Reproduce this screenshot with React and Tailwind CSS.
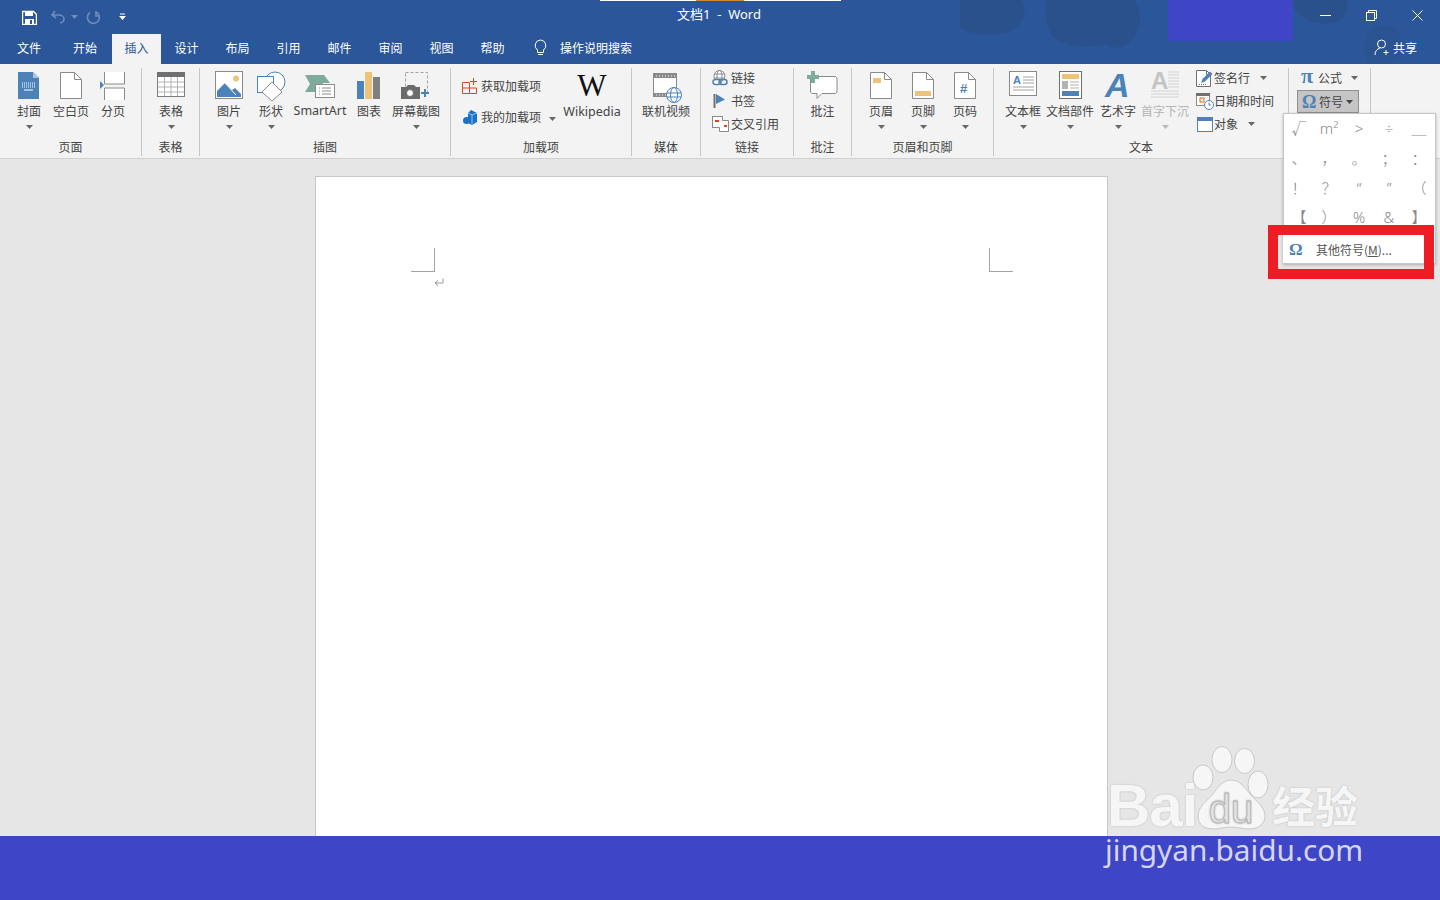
const cjk = "font-['Noto_Sans_CJK_SC','Liberation_Sans',sans-serif]";

function Ico({ w = 30, h = 30, className = '', children }) {
  return (
    <svg width={w} height={h} viewBox={`0 0 ${w} ${h}`} fill="none" className={`shrink-0 ${className}`}>
      {children}
    </svg>
  );
}

const Caret = ({ color = '#666', className = '' }) => (
  <svg width="7" height="4" viewBox="0 0 7 4" className={`shrink-0 ${className}`}>
    <path d="M0 0h7L3.5 4z" fill={color} />
  </svg>
);

function BigBtn({ label, icon, w = 42, caret, disabled, latin }) {
  return (
    <div className="flex flex-col items-center" style={{ width: w }}>
      <div className="h-[32px] pt-[3px] flex justify-center items-start">{icon}</div>
      <div className={`h-[22px] leading-[22px] whitespace-nowrap ${latin ? "font-['Noto_Sans',sans-serif] text-[12.5px]" : 'text-[12px]'} ${disabled ? 'text-[#b5b5b5]' : 'text-[#444]'}`}>
        {label}
      </div>
      {caret && <Caret className="mt-[3px]" color={disabled ? '#bbb' : '#666'} />}
    </div>
  );
}

function Row({ icon, label, caret, iconW = 19, labelClass = '', caretGap = 'ml-[9px]' }) {
  return (
    <div className="h-[20px] flex items-center text-[12px] text-[#444] whitespace-nowrap">
      <div className="flex justify-center" style={{ width: iconW }}>{icon}</div>
      <span className={labelClass}>{label}</span>
      {caret && <Caret className={caretGap} />}
    </div>
  );
}

function Group({ label, w, children, className = '', last }) {
  return (
    <div className={`h-full flex flex-col shrink-0 ${last ? '' : 'border-r border-[#c6c6c6]'}`} style={{ width: w }}>
      <div className={`h-[70px] flex ${className}`}>{children}</div>
      {label && <div className="h-[18px] leading-[18px] text-center text-[12px] text-[#444]">{label}</div>}
    </div>
  );
}

const CoverIcon = (
  <Ico w={22} h={29}>
    <path d="M0 1h15l6 6v21H0z" fill="#4d82b8" />
    <path d="M15 1l6 6h-6z" fill="#a9c4de" />
    <path d="M4 12h13M4 14h13M4 16h13" stroke="#fff" strokeDasharray="1 1" />
    <path d="M6 19h9" stroke="#fff" />
  </Ico>
);
const BlankIcon = (
  <Ico w={22} h={29}>
    <path d="M.5 1.500h14l7 7v19H.5z" fill="#fff" stroke="#8a8a8a" />
    <path d="M14.500 1.500v7h7" stroke="#8a8a8a" />
  </Ico>
);
const BreakIcon = (
  <Ico w={26} h={29}>
    <path d="M4.500 1v12h20V1M4.500 29V17h20v12" stroke="#8a8a8a" fill="#fff" />
    <path d="M0 10l4 4-4 4z" fill="#4d82b8" />
  </Ico>
);
const TableIcon = (
  <Ico w={29} h={27}>
    <rect x=".5" y="1.500" width="27" height="24" fill="#fff" stroke="#808080" />
    <rect x="0" y="1" width="28" height="5" fill="#707070" />
    <path d="M1 11h26M1 16h26M1 21h26M7.500 6v19M14 6v19M20.500 6v19" stroke="#b3b3b3" />
  </Ico>
);
const PictureIcon = (
  <Ico w={29} h={29}>
    <rect x=".5" y=".5" width="27" height="27" fill="#fff" stroke="#8a8a8a" />
    <circle cx="21" cy="7.500" r="3" fill="#edc37a" />
    <path d="M2 26v-6l8-8 7 7 3-2 6 6v3z" fill="#4d82b8" />
    <path d="M10 12l11 12" stroke="#fff" strokeWidth="1" />
  </Ico>
);
const ShapesIcon = (
  <Ico w={30} h={31}>
    <circle cx="19" cy="11" r="10" fill="#fff" stroke="#4d82b8" />
    <rect x="1.500" y="5.500" width="16" height="16" fill="#fff" stroke="#4d82b8" />
    <path d="M16 11l10 10-10 9L6 21z" fill="#fff" stroke="#8a8a8a" />
  </Ico>
);
const SmartArtIcon = (
  <Ico w={31} h={25}>
    <path d="M0 1h19l6 8-7 0-3 9H0l5-8z" fill="#7fab9b" />
    <rect x="10.500" y="10.500" width="19" height="13" fill="#fff" stroke="#8a8a8a" />
    <path d="M14 14h1M17 14h9M14 17h1M17 17h9M14 20h1M17 20h9" stroke="#8a8a8a" />
  </Ico>
);
const ChartIcon = (
  <Ico w={24} h={27}>
    <rect x="0" y="9" width="7" height="18" fill="#4d82b8" />
    <rect x="8" y="0" width="7" height="27" fill="#edc37a" />
    <rect x="16" y="5" width="7" height="22" fill="#7f7f7f" />
  </Ico>
);
const ScreenshotIcon = (
  <Ico w={30} h={28}>
    <rect x="4.500" y=".5" width="22" height="20" stroke="#a3a3a3" strokeDasharray="3 2" />
    <path d="M0 27V15h5l2-2h6l2 2h4v12z" fill="#6b6b6b" />
    <circle cx="9" cy="21" r="3.500" fill="#fff" stroke="#6b6b6b" strokeWidth="1" />
    <path d="M24 17v8M20 21h8" stroke="#4d82b8" strokeWidth="2" />
  </Ico>
);
const GetAddinIcon = (
  <Ico w={16} h={16}>
    <path d="M.5 4.500h7v11h-7zM.5 10h14v5.500h-7" stroke="#d9481c" />
    <path d="M11.500 0v7M8 3.500h7" stroke="#d9481c" />
  </Ico>
);
const MyAddinIcon = (
  <Ico w={15} h={15}>
    <path d="M8 0l6 3v9l-5 3-4-2V3z" fill="#1a73c9" />
    <circle cx="3.500" cy="10.500" r="3.500" fill="#1a73c9" />
    <path d="M5 3l4 2 5-2M9 5v9" stroke="#f3f3f3" strokeWidth=".6" />
  </Ico>
);
const VideoIcon = (
  <Ico w={29} h={30}>
    <rect x=".5" y=".5" width="23" height="23" fill="#fff" stroke="#8a8a8a" />
    <rect x="1" y="1" width="22" height="4" fill="#8a8a8a" />
    <rect x="1" y="20" width="22" height="4" fill="#8a8a8a" />
    <path d="M3 3h1M6 3h1M9 3h1M12 3h1M15 3h1M18 3h1M21 3h1M3 22h1M6 22h1M9 22h1M12 22h1" stroke="#fff" />
    <circle cx="21" cy="22" r="7.500" fill="#fff" stroke="#4d82b8" />
    <ellipse cx="21" cy="22" rx="3.500" ry="7.500" stroke="#4d82b8" />
    <path d="M14 20h14M14 24h14" stroke="#4d82b8" />
  </Ico>
);
const LinkIcon = (
  <Ico w={16} h={16}>
    <circle cx="7.500" cy="6" r="5.500" stroke="#8a8a8a" fill="#fff" />
    <ellipse cx="7.500" cy="6" rx="2.500" ry="5.500" stroke="#8a8a8a" />
    <path d="M2 4h11M2 8h11" stroke="#8a8a8a" />
    <rect x="1" y="9.500" width="8" height="5" rx="2.500" fill="#fff" stroke="#4d82b8" strokeWidth="1.500" />
    <rect x="7" y="9.500" width="8" height="5" rx="2.500" stroke="#4d82b8" strokeWidth="1.500" />
  </Ico>
);
const BookmarkIcon = (
  <Ico w={14} h={16}>
    <path d="M1.500 1v14" stroke="#707070" strokeWidth="2" />
    <path d="M3 1l9 5.500L3 11z" fill="#4d82b8" />
  </Ico>
);
const CrossRefIcon = (
  <Ico w={17} h={16}>
    <rect x=".5" y=".5" width="10" height="11" fill="#fff" stroke="#8a8a8a" />
    <path d="M3 5h4" stroke="#d9481c" strokeWidth="2" />
    <path d="M10.500 4.500h6v11h-9v-4" stroke="#8a8a8a" fill="#fff" />
    <path d="M12 10h3" stroke="#d9481c" strokeWidth="2" />
  </Ico>
);
const CommentIcon = (
  <Ico w={31} h={29}>
    <path d="M3.500 5.500h25l1.500 1.500v14l-1.500 1.500H15l-5 5v-5H5l-1.500-1.500z" fill="#fff" stroke="#8a8a8a" />
    <path d="M6 0v12M0 6h12" stroke="#7fab9b" strokeWidth="4" />
  </Ico>
);
const DocBase = ({ children }) => (
  <Ico w={22} h={29}>
    <path d="M.5 1.500h14l7 7v19H.5z" fill="#fff" stroke="#8a8a8a" />
    <path d="M14.500 1.500v7h7" stroke="#8a8a8a" />
    {children}
  </Ico>
);
const TextBoxIcon = (
  <Ico w={29} h={26} className="overflow-visible">
    <rect x=".5" y=".5" width="27" height="24" fill="#fff" stroke="#8a8a8a" />
    <text x="4" y="13" fontSize="11" fontWeight="700" fill="#4d82b8" fontFamily="Liberation Sans">A</text>
    <path d="M14 6h11M14 9h11M14 12h11M4 16h21M4 19h21" stroke="#a3a3a3" />
  </Ico>
);
const PartsIcon = (
  <Ico w={23} h={29}>
    <rect x=".5" y=".5" width="22" height="27" fill="#fff" stroke="#707070" />
    <rect x="3" y="3" width="17" height="5" fill="#edc37a" />
    <rect x="3" y="10" width="6" height="8" fill="#b3b3b3" />
    <path d="M11 11h9M11 14h9M11 17h9" stroke="#b3b3b3" />
    <rect x="3" y="20" width="17" height="5" fill="#4d82b8" />
  </Ico>
);
const WordArtIcon = (
  <Ico w={28} h={29} className="overflow-visible">
    <text x="1" y="25.500" fontSize="34" fontWeight="700" fontStyle="italic" fill="#4d82b8" fontFamily="Liberation Sans">A</text>
  </Ico>
);
const DropCapIcon = (
  <Ico w={29} h={29} className="overflow-visible">
    <text x="0" y="18" fontSize="24" fontWeight="700" fill="#c4c4c4" fontFamily="Liberation Sans">A</text>
    <path d="M17 1h11M17 4h11M17 7h11M17 10h11M17 13h11M17 16h11M0 20h28M0 23h28M0 26h28" stroke="#d2d2d2" />
  </Ico>
);
const SignIcon = (
  <Ico w={18} h={18}>
    <path d="M.5 1.500h10l4 4v12H.5z" fill="#fff" stroke="#707070" />
    <path d="M10.500 1.500v4h4" stroke="#707070" />
    <path d="M5 14l1.500-4L14 2.500l2.500 2.500L9 12.500z" fill="#4d82b8" />
    <path d="M3 15.500h7" stroke="#707070" strokeDasharray="1 1" />
  </Ico>
);
const DateIcon = (
  <Ico w={18} h={17}>
    <rect x=".5" y=".5" width="13" height="12" fill="#fff" stroke="#8a8a8a" />
    <rect x="0" y="0" width="14" height="3" fill="#707070" />
    <rect x="4" y="5" width="4" height="4" stroke="#d9681c" fill="#fff" />
    <circle cx="13" cy="12" r="4.500" fill="#fff" stroke="#4d82b8" />
    <path d="M13 9.500V12h2" stroke="#4d82b8" />
  </Ico>
);
const ObjectIcon = (
  <Ico w={16} h={15}>
    <rect x=".5" y=".5" width="15" height="14" fill="#fff" stroke="#4d82b8" />
    <rect x="0" y="0" width="16" height="4" fill="#4d82b8" />
  </Ico>
);

const symbols = ['√', 'm²', '>', '÷', '＿', '、', '，', '。', '；', '：', '！', '？', '“', '”', '（', '【', '）', '%', '&', '】'];
const tabs = [
  ['文件', 58],
  ['开始', 54],
  ['插入', 49, true],
  ['设计', 51],
  ['布局', 51],
  ['引用', 51],
  ['邮件', 51],
  ['审阅', 51],
  ['视图', 51],
  ['帮助', 51],
];

export default function App() {
  return (
    <div className={`h-screen w-[1440px] flex flex-col overflow-hidden relative bg-[#e6e6e6] ${cjk}`}>
      {/* title bar */}
      <div className="relative bg-[#2b579a] h-[64px] shrink-0 flex flex-col overflow-hidden">
        <svg className="absolute right-0 top-0" width="480" height="64" viewBox="0 0 480 64">
          <path d="M0 0h62c6 10 2 26-14 32-14 4-34 4-48-4zM86 0h88c10 14 6 32-4 42-4 6-16 8-24 2-14 4-40 4-52-6-8-10-10-26-8-38zM330 0h56c4 8 0 18-10 22-12 4-38 2-46-22z" fill="#2a518b" />
          <path d="M410 30c10-8 24-6 30 4 4 10 0 24-8 30h-24c-6-10-6-26 2-34z" fill="#2a5391" />
        </svg>
        <div className="relative h-[34px] flex items-center">
          <div className="w-[677px] flex items-center pl-[22px] shrink-0">
            <Ico w={15} h={15}>
              <path d="M.5 1.500h11l3 3v10H.5z" stroke="#fff" strokeWidth="1.400" fill="none" />
              <rect x="3" y="2" width="8" height="4" fill="#fff" />
              <rect x="3" y="9" width="9" height="6" fill="#fff" />
              <rect x="8" y="10" width="2" height="4" fill="#2b579a" />
            </Ico>
            <Ico w={14} h={14} className="ml-[14px]">
              <path d="M4 1L1 5l4 3M1 5h7c3 0 5 2 5 4s-2 4-4 4" stroke="#6d8cbb" strokeWidth="1.600" />
            </Ico>
            <Caret color="#6d8cbb" className="ml-[6px]" />
            <Ico w={15} h={15} className="ml-[8px]">
              <path d="M4 2.500a6 6 0 1 0 6-.5M10 1v5h4" stroke="#6d8cbb" strokeWidth="1.600" />
            </Ico>
            <Ico w={7} h={8} className="ml-[18px]">
              <path d="M1 1h5" stroke="#fff" />
              <path d="M0 3h7L3.500 7z" fill="#fff" />
            </Ico>
          </div>
          <div className="text-[13px] text-white whitespace-pre font-['Noto_Sans','Noto_Sans_CJK_SC',sans-serif] -mt-[4px]">文档1  -  Word</div>
          <div className="ml-auto flex items-center -mt-[4px]">
            <div className="w-[46px] flex justify-center">
              <Ico w={11} h={11}><path d="M0 5.500h11" stroke="#fff" /></Ico>
            </div>
            <div className="w-[46px] flex justify-center">
              <Ico w={11} h={11}>
                <rect x=".5" y="2.500" width="8" height="8" stroke="#fff" />
                <path d="M2.500 2.500v-2h8v8h-2" stroke="#fff" />
              </Ico>
            </div>
            <div className="w-[46px] flex justify-center">
              <Ico w={11} h={11}><path d="M.5.500l10 10M10.500.500l-10 10" stroke="#fff" /></Ico>
            </div>
          </div>
        </div>
        <div className="relative h-[30px] flex items-stretch text-[12px] text-white">
          {tabs.map(([t, w, active]) => (
            <div
              key={t}
              style={{ width: w }}
              className={`flex items-center justify-center shrink-0 pb-[3px] ${active ? 'bg-[#f3f3f3] text-[#2b579a]' : ''}`}
            >
              {t}
            </div>
          ))}
          <div className="flex items-center ml-[16px] pb-[3px]">
            <Ico w={13} h={17}>
              <path d="M6.500 1a5.500 5.500 0 0 1 3 10v2.500h-6V11a5.500 5.500 0 0 1 3-10zM4 15.500h5" stroke="#fff" />
            </Ico>
            <span className="ml-[13px]">操作说明搜索</span>
          </div>
          <div className="ml-auto flex items-center pr-[23px] pb-[3px]">
            <Ico w={16} h={17}>
              <circle cx="7.500" cy="5" r="4" stroke="#fff" />
              <path d="M1 16c0-4 2-6 5-7M12 11v5M9.500 13.500h5" stroke="#fff" />
            </Ico>
            <span className="ml-[3px]">共享</span>
          </div>
        </div>
      </div>

      {/* ribbon */}
      <div className="h-[95px] shrink-0 bg-[#f3f3f3] border-b border-[#d0d0d0] flex pt-[4px] pb-[2px]">
        <Group label="页面" w={142} className="pl-[8px]">
          <BigBtn label="封面" icon={CoverIcon} caret />
          <BigBtn label="空白页" icon={BlankIcon} />
          <BigBtn label="分页" icon={BreakIcon} />
        </Group>
        <Group label="表格" w={58} className="pl-[1px]">
          <BigBtn label="表格" icon={TableIcon} w={57} caret />
        </Group>
        <Group label="插图" w={251} className="pl-[8px]">
          <BigBtn label="图片" icon={PictureIcon} caret />
          <BigBtn label="形状" icon={ShapesIcon} caret />
          <BigBtn label="SmartArt" icon={<div className="pt-[3px]">{SmartArtIcon}</div>} w={56} latin />
          <BigBtn label="图表" icon={<div className="pt-[1px]">{ChartIcon}</div>} />
          <BigBtn label="屏幕截图" icon={<div className="pt-[1px]">{ScreenshotIcon}</div>} w={52} caret />
        </Group>
        <Group label="加载项" w={181} className="pl-[11px]">
          <div className="flex flex-col w-[100px] pt-[8px] gap-[11px]">
            <Row icon={GetAddinIcon} label="获取加载项" iconW={16} labelClass="ml-[3px]" />
            <Row icon={MyAddinIcon} label="我的加载项" iconW={16} labelClass="ml-[3px]" caret caretGap="ml-[8px] mt-[3px]" />
          </div>
          <div className="flex flex-col items-center w-[58px] ml-[1px]">
            <div className="h-[33px] pt-[3px] leading-[30px] text-[31px] font-['Liberation_Serif',serif] text-[#111]">W</div>
            <div className="h-[22px] leading-[22px] text-[12.500px] text-[#444] font-['Noto_Sans',sans-serif]">Wikipedia</div>
          </div>
        </Group>
        <Group label="媒体" w={69}>
          <BigBtn label="联机视频" icon={<div className="pl-[2px] pt-[2px]">{VideoIcon}</div>} w={68} />
        </Group>
        <Group label="链接" w={93} className="pl-[11px]">
          <div className="flex flex-col gap-[3px]">
            <Row icon={LinkIcon} label="链接" iconW={16} labelClass="ml-[3px]" />
            <Row icon={BookmarkIcon} label="书签" iconW={16} labelClass="ml-[3px]" />
            <Row icon={CrossRefIcon} label="交叉引用" iconW={16} labelClass="ml-[3px]" />
          </div>
        </Group>
        <Group label="批注" w={58}>
          <BigBtn label="批注" icon={CommentIcon} w={57} />
        </Group>
        <Group label="页眉和页脚" w={142} className="pl-[8px]">
          <BigBtn
            label="页眉"
            caret
            icon={<DocBase><rect x="3" y="7" width="8" height="5" fill="#edc37a" /></DocBase>}
          />
          <BigBtn
            label="页脚"
            caret
            icon={<DocBase><rect x="3" y="20" width="16" height="5" fill="#edc37a" /></DocBase>}
          />
          <BigBtn
            label="页码"
            caret
            icon={
              <DocBase>
                <text x="6" y="22" fontSize="13" fontWeight="700" fill="#4d82b8" fontFamily="Liberation Sans">#</text>
              </DocBase>
            }
          />
        </Group>
        <Group label="文本" w={295} className="pl-[6px]">
          <BigBtn label="文本框" icon={TextBoxIcon} w={46} caret />
          <BigBtn label="文档部件" icon={PartsIcon} w={48} caret />
          <BigBtn label="艺术字" icon={WordArtIcon} w={48} caret />
          <BigBtn label="首字下沉" icon={DropCapIcon} w={46} caret disabled />
          <div className="flex flex-col gap-[3px] ml-[7px]">
            <Row icon={SignIcon} label="签名行" caret caretGap="ml-[10px]" />
            <Row icon={DateIcon} label="日期和时间" />
            <Row icon={ObjectIcon} label="对象" caret caretGap="ml-[10px]" />
          </div>
        </Group>
        <Group w={82} className="pl-[8px]">
          <div className="flex flex-col gap-[2px]">
            <div className="h-[20px] pl-[4px] flex items-center text-[12px] text-[#444] whitespace-nowrap">
              <span className="w-[17px] text-[22px] leading-none -mt-[4px] font-bold text-[#4d82b8] font-['Liberation_Serif',serif]">π</span>
              <span>公式</span>
              <Caret className="ml-[9px]" />
            </div>
            <div className="h-[23px] w-[62px] pl-[4px] flex items-center bg-[#c5c5c5] border border-[#8f8f8f] text-[12px] text-[#444] whitespace-nowrap">
              <span className="w-[17px] text-[18px] leading-none font-bold text-[#4d82b8] font-['Liberation_Serif',serif]">Ω</span>
              <span>符号</span>
              <Caret className="ml-[3px]" color="#444" />
            </div>
          </div>
        </Group>
      </div>

      {/* document area */}
      <div className="flex-1 min-h-0 pt-[17px] pl-[315px]">
        <div className="w-[793px] h-full bg-white border-l border-r border-t border-[#c6c6c6] pt-[71px] pl-[95px] pr-[94px]">
          <div className="flex justify-between">
            <div className="w-[24px] h-[24px] border-r border-b border-[#a3a3a3]" />
            <div className="w-[24px] h-[24px] border-l border-b border-[#a3a3a3]" />
          </div>
          <Ico w={10} h={10} className="ml-[23px] mt-[6px]">
            <path d="M9 .5V5H1.500M4 2.500L1 5l3 2.500" stroke="#9a9a9a" />
          </Ico>
        </div>
      </div>

      {/* bottom band */}
      <div className="h-[64px] shrink-0 bg-[#3f45c7]" />

      {/* top progress line */}
      <div className="absolute left-[600px] top-0 w-[241px] h-px bg-white">
        <div className="ml-[96px] w-[48px] h-px bg-[#d2862a]" />
      </div>

      {/* masked user block */}
      <div className="absolute left-[1168px] top-0 w-[125px] h-[41px] bg-[#3f45c7]" />

      {/* symbol dropdown */}
      <div className="absolute left-[1283px] top-[113px] w-[153px] h-[151px] bg-white border border-[#c6c6c6] shadow-[0_1px_3px_rgba(0,0,0,0.25)] overflow-hidden">
        <div className="grid grid-cols-[repeat(5,30px)] auto-rows-[29.700px] text-[15px] font-light text-[#888] font-['Noto_Sans','Noto_Sans_CJK_SC',sans-serif]">
          {symbols.map((s, i) => (
            <div key={i} className="flex items-center justify-center leading-none">{s}</div>
          ))}
        </div>
      </div>
      <div className="absolute left-[1268px] top-[225px] w-[166px] h-[54px] border-[10px] border-[#ee1c25]">
        <div className="ml-[5px] w-[141px] h-[28px] bg-white flex items-center text-[12px] text-[#555]">
          <span className="w-[33px] pl-[6px] text-[17px] leading-none font-bold text-[#4d82b8] font-['Liberation_Serif',serif]">Ω</span>
          <span className="pt-[1px]">其他符号(<span className="underline">M</span>)...</span>
        </div>
      </div>

      {/* watermark */}
      <div className="absolute left-[1105px] top-[746px] w-[270px] h-[126px] pointer-events-none">
        <div className="flex items-end h-[84px] pl-[2px] text-[#f6f6f6] font-bold [text-shadow:0_0_2px_#b5b5b5]">
          <span className="text-[60px] leading-[60px] -mb-[6px] tracking-[-1px] w-[83px] shrink-0 font-['Liberation_Sans',sans-serif]">Bai</span>
          <svg width="80" height="84" viewBox="0 0 80 84" className="shrink-0">
            <g fill="#f6f6f6" stroke="#c9c9c9">
              <ellipse cx="32" cy="13.500" rx="10" ry="13" />
              <ellipse cx="54.500" cy="15" rx="10" ry="12.500" />
              <ellipse cx="13" cy="31.500" rx="10" ry="12.500" />
              <ellipse cx="68" cy="38.500" rx="10" ry="13.500" />
              <path d="M41 34c8 0 13 6 19 14 6 7 15 13 15 22 0 9-8 13-16 13-6 0-12-2-18-2s-12 2-18 2c-8 0-15-4-15-13 0-9 8-14 14-21 6-8 11-15 19-15z" />
            </g>
            <text x="41" y="77" textAnchor="middle" fontSize="40" fontWeight="400" fill="#eeeeee" stroke="#b5b5b5" strokeWidth=".8" fontFamily="Liberation Sans">du</text>
          </svg>
          <span className={`text-[43px] leading-[50px] ml-[2px] mb-[1px] ${cjk}`}>经验</span>
        </div>
        <div className="text-[29.800px] leading-[40px] text-[#d4d6f2] font-['Noto_Sans',sans-serif] whitespace-nowrap">jingyan.baidu.com</div>
      </div>
    </div>
  );
}
